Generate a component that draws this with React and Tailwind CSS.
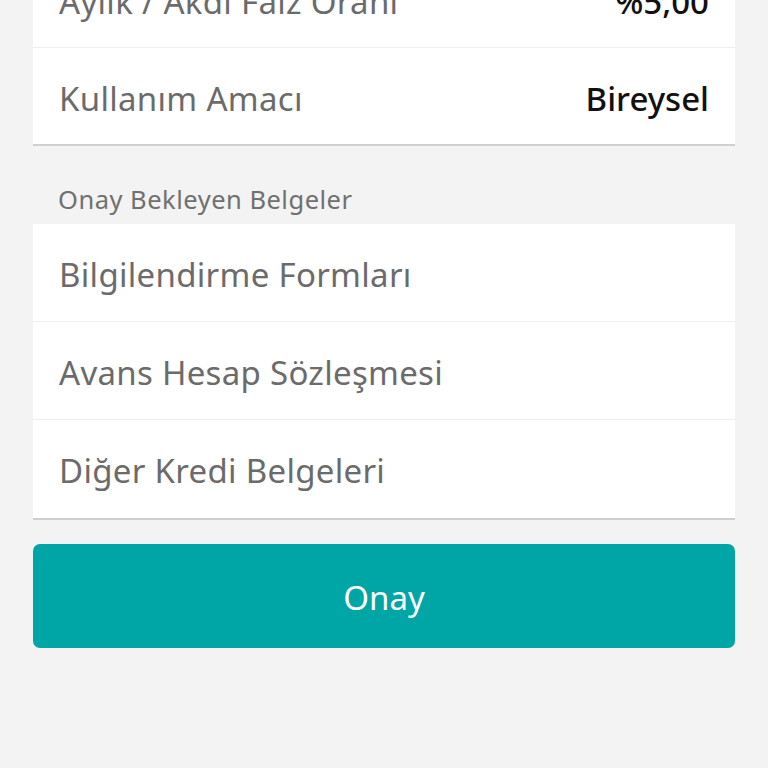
export default function App() {
  const font = { fontFamily: "'Noto Sans', sans-serif" };
  return (
    <div className="w-[768px] h-[768px] overflow-hidden bg-[#f3f3f3]" style={font}>
      <div className="mx-[33px] -mt-[49px]">
        <div className="bg-white border-b-2 border-[#cfcfcf]">
          <div className="h-[97px] flex items-center justify-between px-[26px] pt-[6px] border-b border-[#efefef]">
            <span className="text-[33px] tracking-[0.3px] text-[#6b6b6b]">Aylık / Akdi Faiz Oranı</span>
            <span className="text-[33px] font-medium text-[#111]">%5,00</span>
          </div>
          <div className="h-[96px] flex items-center justify-between px-[26px] pt-[6px]">
            <span className="text-[33px] tracking-[0.3px] text-[#6b6b6b]">Kullanım Amacı</span>
            <span className="text-[33px] font-medium text-[#111]">Bireysel</span>
          </div>
        </div>
        <div className="h-[78px] flex items-center px-[25px] pt-[28px]">
          <span className="text-[25.5px] tracking-[0.5px] text-[#707070]">Onay Bekleyen Belgeler</span>
        </div>
        <div className="bg-white border-b-2 border-[#cfcfcf]">
          {["Bilgilendirme Formları", "Avans Hesap Sözleşmesi", "Diğer Kredi Belgeleri"].map((t, i) => (
            <div
              key={t}
              className={"h-[98px] flex items-center px-[26px] pt-[4px] " + (i < 2 ? "border-b border-[#efefef]" : "")}
            >
              <span className="text-[33px] tracking-[0.3px] text-[#6b6b6b]">{t}</span>
            </div>
          ))}
        </div>
        <button className="mt-[24px] w-full h-[104px] rounded-[7px] bg-[#00a5a5] flex items-center justify-center pt-[3px]">
          <span className="text-[33px] text-white">Onay</span>
        </button>
      </div>
    </div>
  );
}
